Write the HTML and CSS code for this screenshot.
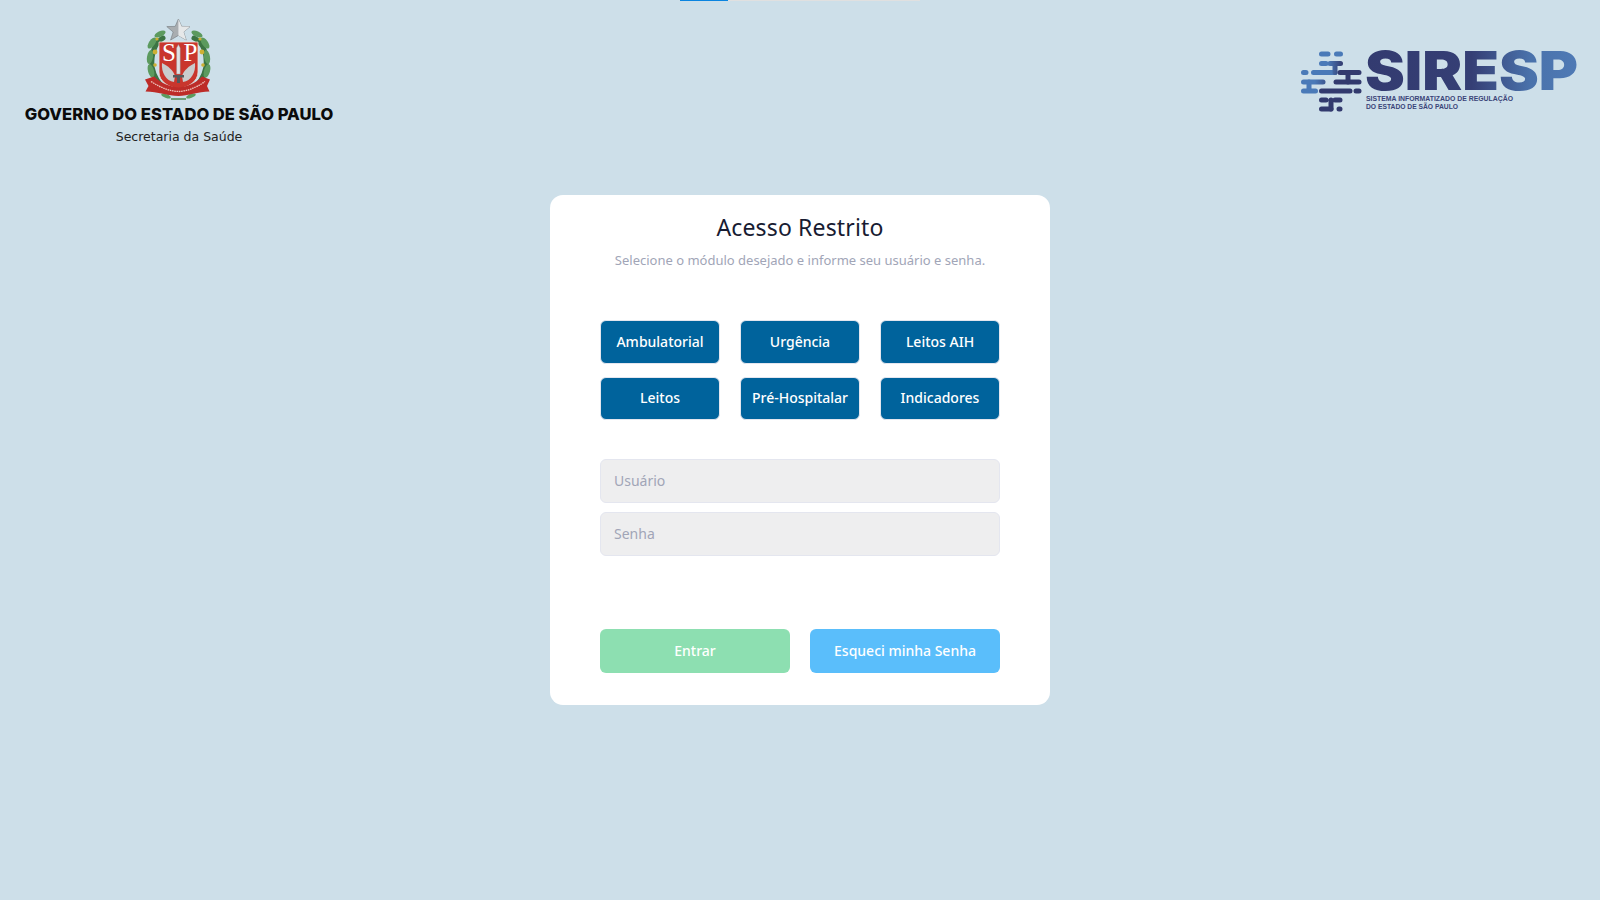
FILE: index.html
```html
<!DOCTYPE html>
<html lang="pt-BR">
<head>
    <meta charset="UTF-8">
    <meta name="viewport" content="width=device-width, initial-scale=1.0">
    <title>SIRESP - Acesso Restrito</title>
    <link rel="stylesheet" href="styles.css">
</head>
<body>

    <div class="progress"><div class="progress-fill"></div></div>

    <header class="top">
        <div class="gov">
            <svg class="brasao" viewBox="0 0 100 95" width="100" height="95">
                <!-- coroa de folhas -->
                <g fill="none" stroke="#3c7443" stroke-width="5" stroke-linecap="round">
                    <path d="M33 28 C24 33 21 45 22 57 C24 68 30 76 38 82"/>
                    <path d="M64 28 C74 33 77 45 76 57 C74 68 68 76 60 82"/>
                </g>
                <g fill="#5c9a5e">
                    <ellipse cx="30" cy="24" rx="6" ry="2.8" transform="rotate(-25 30 24)"/>
                    <ellipse cx="67" cy="24" rx="6" ry="2.8" transform="rotate(25 67 24)"/>
                    <ellipse cx="22" cy="33" rx="6.5" ry="3" transform="rotate(-55 22 33)"/>
                    <ellipse cx="75" cy="33" rx="6.5" ry="3" transform="rotate(55 75 33)"/>
                    <ellipse cx="20" cy="47" rx="7" ry="3" transform="rotate(-80 20 47)"/>
                    <ellipse cx="77" cy="47" rx="7" ry="3" transform="rotate(80 77 47)"/>
                    <ellipse cx="21" cy="61" rx="7" ry="3" transform="rotate(75 21 61)"/>
                    <ellipse cx="77" cy="61" rx="7" ry="3" transform="rotate(-75 77 61)"/>
                    <ellipse cx="36" cy="86" rx="5" ry="1.8" transform="rotate(20 36 86)"/>
                    <ellipse cx="61" cy="86" rx="5" ry="1.8" transform="rotate(-20 61 86)"/>
                </g>
                <g fill="#cdb033">
                    <circle cx="25" cy="42" r="2.4"/>
                    <circle cx="72" cy="42" r="2.4"/>
                    <circle cx="27" cy="29" r="1.6"/>
                    <circle cx="70" cy="29" r="1.6"/>
                    <circle cx="25" cy="55" r="1.8"/>
                    <circle cx="73" cy="55" r="1.8"/>
                </g>
                <path d="M29 32 H68 V62 C68 72 58 77 48.5 79 C39 77 29 72 29 62 Z" fill="#c9362d" stroke="#e9e4dc" stroke-width="0.8"/>
                <text class="brasao-letra" x="32" y="51">S</text>
                <text class="brasao-letra" x="53.5" y="51">P</text>
                <path d="M46.6 38 L48.4 34.5 L50.2 38 V64 H46.6 Z" fill="#dfe1e3" stroke="#8d9296" stroke-width="0.4"/>
                <path d="M32 53 C38 56 43 60 45 66 L44 72 C36 71 31 62 32 53 Z" fill="#c9cccd"/>
                <path d="M65 53 C59 56 54 60 52 66 L53 72 C61 71 66 62 65 53 Z" fill="#c9cccd"/>
                <path d="M43 65 H54 V67.5 H43 Z M47 67.5 H50 V73 H47 Z" fill="#55585a"/>
                <path d="M15 69.5 L24 66.5 C32 74 40 76.5 48.5 77.5 C57 76.5 65 74 72 66.5 L80 69.5 L77 76 L79.5 81.5 C68 81.5 58 86 48.5 86 C38 86 28 81.5 15.5 81.5 L18.5 76 Z" fill="#bd2c28"/>
                <path d="M21 71.5 C32 78.5 40 81 48.5 81.5 C57 81 65 78.5 75 71.5" fill="none" stroke="#edc3bb" stroke-width="1.3" stroke-dasharray="1.6 0.7"/>
                <path d="M41 89 H56" stroke="#4d8a52" stroke-width="1.5"/>
                <path d="M48.4 9 L51.6 16.4 L60 16.6 L53.6 22 L56.2 30 L48.4 25.4 L40.6 30 L43.2 22 L36.8 16.6 L45.2 16.4 Z" fill="#a9adb0" stroke="#7d8286" stroke-width="0.7"/>
                <path d="M48.4 9 L48.4 25.4 L56.2 30 L53.6 22 L60 16.6 L51.6 16.4 Z" fill="#e6e8e9"/>
            </svg>
            <div class="gov-nome">GOVERNO DO ESTADO DE SÃO PAULO</div>
            <div class="gov-sec">Secretaria da Saúde</div>
        </div>

        <svg class="siresp" viewBox="0 0 320 100" width="320" height="100">
            <defs>
                <linearGradient id="gradTexto" x1="86" x2="297" y1="0" y2="0" gradientUnits="userSpaceOnUse">
                    <stop offset="0" stop-color="#333b70"/>
                    <stop offset="0.5" stop-color="#353f75"/>
                    <stop offset="0.78" stop-color="#4a72ab"/>
                    <stop offset="1" stop-color="#4f7ab5"/>
                </linearGradient>
                <linearGradient id="gradBarra" x1="21" x2="55" y1="0" y2="0" gradientUnits="userSpaceOnUse">
                    <stop offset="0.4" stop-color="#4a7ab8"/>
                    <stop offset="1" stop-color="#323a6e"/>
                </linearGradient>
                <linearGradient id="gradTopo" x1="48" x2="63" y1="0" y2="0" gradientUnits="userSpaceOnUse">
                    <stop offset="0" stop-color="#4a7ab8"/>
                    <stop offset="1" stop-color="#323a6e"/>
                </linearGradient>
            </defs>
            <g fill="none" stroke-width="5" stroke-linecap="round" stroke-linejoin="round">
                <g stroke="#4a7ab8">
                    <path d="M41.5 24 H48 M56.5 24 H60.5"/>
                    <path d="M41.5 33.5 H46"/>
                    <path d="M23.5 42.5 H26 M33.5 42.5 H55"/>
                    <path d="M29 52 V61 M23.5 61 H35.5"/>
                </g>
                <path d="M23.5 52 H43" stroke="url(#gradBarra)"/>
                <path d="M50 33.5 H60.5 M55 33.5 V42.5" stroke="url(#gradTopo)"/>
                <g stroke="#323a6e">
                    <path d="M60 42.5 H79 M68 42.5 V52"/>
                    <path d="M56 52 H79"/>
                    <path d="M41.5 61 H70 M76 61 H79"/>
                    <path d="M41.5 70 H46 M55 70 H60 M51 70 V79"/>
                    <path d="M41.5 79 H51 M59 79 H60"/>
                </g>
            </g>
            <text class="siresp-nome" x="85" y="59.5" textLength="213" lengthAdjust="spacingAndGlyphs" fill="url(#gradTexto)">SIRESP</text>
            <text class="siresp-sub" x="86" y="70.5" textLength="147" lengthAdjust="spacingAndGlyphs">SISTEMA INFORMATIZADO DE REGULAÇÃO</text>
            <text class="siresp-sub" x="86" y="78.5" textLength="92" lengthAdjust="spacingAndGlyphs">DO ESTADO DE SÃO PAULO</text>
        </svg>
    </header>

    <main class="card">
        <h1>Acesso Restrito</h1>
        <p class="sub">Selecione o módulo desejado e informe seu usuário e senha.</p>

        <div class="modulos">
            <button class="btn-modulo">Ambulatorial</button>
            <button class="btn-modulo">Urgência</button>
            <button class="btn-modulo">Leitos AIH</button>
            <button class="btn-modulo">Leitos</button>
            <button class="btn-modulo">Pré-Hospitalar</button>
            <button class="btn-modulo">Indicadores</button>
        </div>

        <input class="campo" type="text" placeholder="Usuário">
        <input class="campo" type="password" placeholder="Senha">

        <div class="acoes">
            <button class="btn-acao btn-entrar">Entrar</button>
            <button class="btn-acao btn-esqueci">Esqueci minha Senha</button>
        </div>
    </main>

</body>
</html>
```

FILE: styles.css
```css
* {
    box-sizing: border-box;
}
body {
    margin: 0;
    height: 900px;
    overflow: hidden;
    background-color: #cddfe9;
    font-family: "Noto Sans", Arial, sans-serif;
}
.progress {
    width: 240px;
    height: 1px;
    margin-left: 680px;
    background: #e0e0e0;
}
.progress-fill {
    width: 48px;
    height: 1px;
    background: #0a84e0;
}
.top {
    display: flex;
    justify-content: space-between;
    align-items: flex-start;
    height: 194px;
}
.gov {
    width: 358px;
    display: flex;
    flex-direction: column;
    align-items: center;
    padding-top: 9px;
}
.brasao {
    display: block;
    margin-left: 2px;
}
.brasao-letra {
    font-family: "Liberation Serif", serif;
    font-size: 25px;
    fill: #fff;
}
.gov-nome {
    font-family: Inter, sans-serif;
    font-weight: 800;
    font-size: 16.6px;
    line-height: 20px;
    color: #0b0b0b;
    white-space: nowrap;
    margin-top: -1px;
}
.gov-sec {
    font-family: "DejaVu Sans", sans-serif;
    font-size: 12.5px;
    line-height: 16px;
    color: #222;
    margin-top: 5px;
}
.siresp {
    display: block;
    margin-top: 29px;
}
.siresp-nome {
    font-family: Inter, sans-serif;
    font-weight: 900;
    font-size: 53px;
}
.siresp-sub {
    font-family: "Liberation Sans", sans-serif;
    font-weight: 700;
    font-size: 6.6px;
    fill: #3a4478;
}
.card {
    width: 500px;
    height: 510px;
    margin: 0 auto;
    padding: 19px 50px 0;
    background: #fff;
    border-radius: 13px;
    text-align: center;
}
h1 {
    margin: 0;
    font-size: 23px;
    line-height: 26px;
    font-weight: 400;
    color: #181c32;
    letter-spacing: 0.15px;
}
.sub {
    margin: 10px 0 0;
    font-size: 13px;
    line-height: 20px;
    color: #a1a5b7;
}
.modulos {
    display: grid;
    grid-template-columns: repeat(3, 120px);
    grid-template-rows: 44px 43px;
    justify-content: space-between;
    row-gap: 13px;
    margin-top: 50px;
}
.btn-modulo {
    padding: 0 0 2px;
    border: 1px solid #e4e6ef;
    border-radius: 6px;
    background: #00639c;
    color: #fff;
    font-family: inherit;
    font-size: 14px;
    font-weight: 500;
}
.campo {
    display: block;
    width: 400px;
    height: 44px;
    padding: 0 13px 2px;
    margin-top: 9px;
    background: #eeeeef;
    border: 1px solid #e4e6ef;
    border-radius: 6px;
    font-family: inherit;
    font-size: 14px;
}
.modulos + .campo {
    margin-top: 39px;
}
.campo::placeholder {
    color: #a1a5b7;
}
.acoes {
    display: flex;
    justify-content: space-between;
    margin-top: 73px;
}
.btn-acao {
    width: 190px;
    height: 44px;
    padding: 0 0 2px;
    border: none;
    border-radius: 6px;
    color: #fff;
    font-family: inherit;
    font-size: 14px;
    font-weight: 500;
}
.btn-entrar {
    background: #8ddfb1;
}
.btn-esqueci {
    background: #5abefb;
}
```
